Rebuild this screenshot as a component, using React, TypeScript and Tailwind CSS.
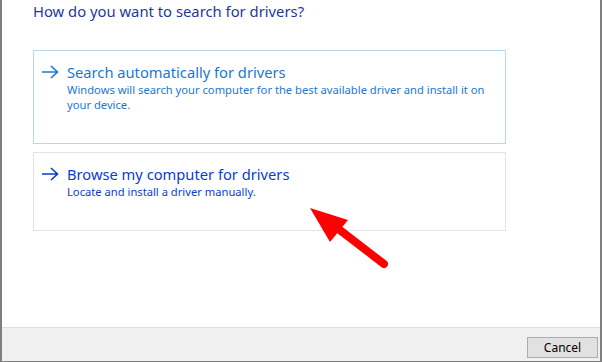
import React from "react";

const font = { fontFamily: '"Noto Sans", "Open Sans", sans-serif' };

function LinkArrow({ color }: { color: string }) {
  return (
    <svg width="18" height="14" viewBox="0 0 18 14" className="shrink-0" style={{ color }}>
      <path d="M1 7h15.5M10 1l6.5 6-6.5 6" fill="none" stroke="currentColor" strokeWidth="1.6" />
    </svg>
  );
}

function CommandLink({
  title,
  desc,
  color,
  border,
  height,
}: {
  title: string;
  desc: string;
  color: string;
  border: string;
  height: string;
}) {
  return (
    <div className={`ml-[31px] w-[473px] border ${border} ${height} pl-[7px] pr-2 pt-[11px]`}>
      <div className="flex items-center gap-2 h-5">
        <LinkArrow color={color} />
        <span className="text-[14.7px] leading-5" style={{ color }}>
          {title}
        </span>
      </div>
      <p className="ml-[26px] text-[11.2px] leading-[15px]" style={{ color }}>
        {desc}
      </p>
    </div>
  );
}

export default function App() {
  return (
    <div
      className="relative w-[602px] h-[362px] bg-white flex flex-col border-l-2 border-r-2 border-b border-[#7f7f7f] overflow-hidden"
      style={font}
    >
      <h1 className="ml-[31px] text-[14.8px] leading-[22px] text-[#1e3a96]">How do you want to search for drivers?</h1>

      <div className="mt-[28px] flex flex-col gap-2">
        <CommandLink
          title="Search automatically for drivers"
          desc="Windows will search your computer for the best available driver and install it on your device."
          color="#1a78d4"
          border="border-[#b6d6f2]"
          height="h-[94px]"
        />
        <CommandLink
          title="Browse my computer for drivers"
          desc="Locate and install a driver manually."
          color="#0a3ccf"
          border="border-[#e3e3e3]"
          height="h-[79px]"
        />
      </div>

      <div className="flex-1" />

      <div className="h-[34px] bg-[#f0f0f0] border-t border-[#dfdfdf] flex justify-end items-start pt-[9px] pr-[2px]">
        <button className="w-[71px] h-[21px] bg-[#e1e1e1] border border-[#adadad] text-[12px] leading-none text-black">
          Cancel
        </button>
      </div>

      {/* red pointer over the second option */}
      <svg className="absolute left-0 top-0 pointer-events-none" width="602" height="362" viewBox="0 0 602 362">
        <path d="M310 208 L348 220 L330 242 Z" fill="#ff0000" transform="translate(-2 0)" />
        <line x1="332" y1="224" x2="384" y2="264" stroke="#ff0000" strokeWidth="8" strokeLinecap="round" transform="translate(-2 0)" />
      </svg>
    </div>
  );
}
